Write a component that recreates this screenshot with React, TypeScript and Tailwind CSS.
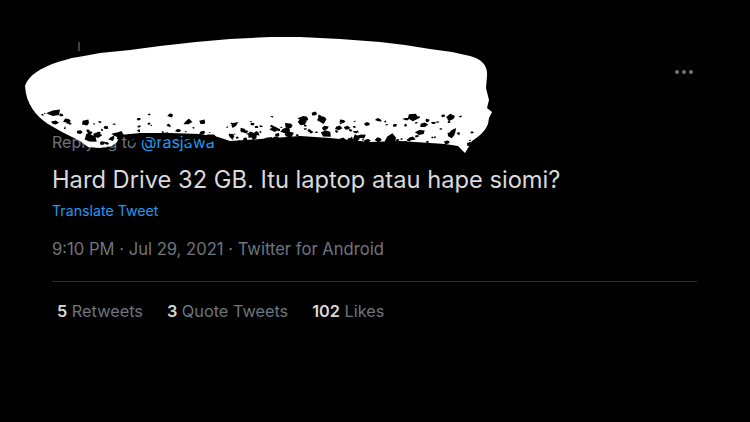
import { useMemo } from "react";

const FONT = "font-['Inter','Liberation_Sans',sans-serif]";

/** Scribbled-out redaction over the author's name. Speckles are seeded so the
 *  picture stays the same on every load. */
function Scribble() {
  const specks = useMemo(() => {
    let s = 11;
    const rnd = () => {
      s = (s * 16807) % 2147483647;
      return (s - 1) / 2147483646;
    };
    const out: string[] = [];
    for (let i = 0; i < 210; i++) {
      const x = 42 + rnd() * 430;
      // denser toward the bottom of the stroke
      const y = 110 + Math.sqrt(rnd()) * 34;
      const r = 0.8 + rnd() * rnd() * 5.5;
      const pts: string[] = [];
      const n = 5;
      const rot = rnd() * Math.PI;
      for (let k = 0; k < n; k++) {
        const a = rot + (k / n) * Math.PI * 2;
        const rr = r * (0.4 + rnd() * 0.9);
        pts.push(`${(x + Math.cos(a) * rr * 1.5).toFixed(1)},${(y + Math.sin(a) * rr).toFixed(1)}`);
      }
      out.push(`M${pts.join(" L")} Z`);
    }
    return out.join(" ");
  }, []);

  return (
    <svg
      className="absolute left-0 top-0 pointer-events-none"
      width={750}
      height={422}
      viewBox="0 0 750 422"
    >
      <path
        fill="#fff"
        d="M25,86 C28,76 40,68 58,62 L72,58 L84,56 L100,53 L130,50 L160,46 L196,42 L230,39 L270,37 L300,37 L340,39 L380,42 L405,45 L430,49 L452,52 L470,56 C482,59 488,66 487,76 L486,88 L489,100 L487,108 L492,112 L489,118 L488,124 C485,132 478,137 472,141 L468,148 L465,153 L458,146 L445,144 L430,143 L400,141 L370,142 L330,138 L300,136 L260,139 L230,141 L218,137 L200,134 L170,133 L140,133 L120,135 L117,142 L112,146 L100,148 L88,147 L80,141 L70,136 L62,132 L48,124 C36,116 26,104 25,86 Z"
      />
      <path fill="#000" d={specks} />
    </svg>
  );
}

export default function App() {
  return (
    <div className={`relative w-[750px] h-[422px] bg-black overflow-hidden ${FONT}`}>
      <div className="flex flex-col pl-[52px] pr-[53px] pt-[42px]">
        <div className="flex justify-between h-[90px]">
          <div className="ml-[26px] w-[2px] h-[9px] bg-[#3d4145]" />
          <div className="mt-[28px] mr-[4px] flex gap-[3px]">
            <span className="w-[4px] h-[4px] rounded-full bg-[#6e767d]" />
            <span className="w-[4px] h-[4px] rounded-full bg-[#6e767d]" />
            <span className="w-[4px] h-[4px] rounded-full bg-[#6e767d]" />
          </div>
        </div>
        <div className="text-[16px] leading-[20px] text-[#6e767d]">
          Replying to <span className="text-[#1d9bf0]">@rasjawa</span>
        </div>
        <p className="mt-[14px] text-[23.7px] leading-[28px] text-[#d9d9d9]">
          Hard Drive 32 GB. Itu laptop atau hape siomi?
        </p>
        <div className="mt-[8px] text-[14.2px] leading-[18px] text-[#1d9bf0]">
          Translate Tweet
        </div>
        <div className="mt-[19px] text-[16.6px] leading-[20px] text-[#6e767d]">
          9:10 PM · Jul 29, 2021 · Twitter for Android
        </div>
        <div className="mt-[22px] border-t border-[#2f3336]" />
        <div className="mt-[19px] pl-[5px] flex gap-[24px] text-[16.3px] leading-[20px] text-[#6e767d]">
          <span>
            <b className="font-semibold text-[#d9d9d9]">5</b> Retweets
          </span>
          <span>
            <b className="font-semibold text-[#d9d9d9]">3</b> Quote Tweets
          </span>
          <span>
            <b className="font-semibold text-[#d9d9d9]">102</b> Likes
          </span>
        </div>
      </div>
      <Scribble />
    </div>
  );
}
